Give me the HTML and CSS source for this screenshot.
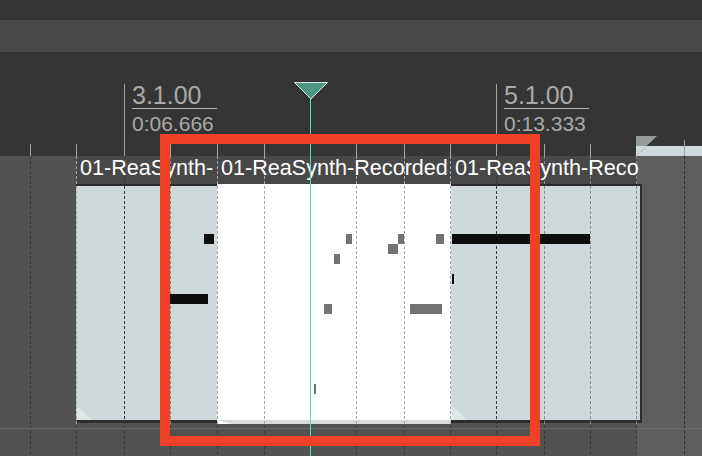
FILE: index.html
```html
<!DOCTYPE html>
<html>
<head>
<meta charset="utf-8">
<link rel="stylesheet" href="styles.css">
</head>
<body>
<div class="app">
  <div class="topbar"></div>
  <div class="band"></div>
  <div class="ruler">
    <span class="tick" style="left:30px"></span>
    <span class="tick" style="left:76px"></span>
    <span class="tick major" style="left:124px"></span>
    <span class="tick" style="left:170px"></span>
    <span class="tick" style="left:217px"></span>
    <span class="tick" style="left:264px"></span>
    <span class="tick" style="left:310px"></span>
    <span class="tick" style="left:356px"></span>
    <span class="tick" style="left:404px"></span>
    <span class="tick" style="left:450px"></span>
    <span class="tick major" style="left:496px"></span>
    <span class="tick" style="left:544px"></span>
    <span class="tick" style="left:590px"></span>
    <span class="tick" style="left:684px"></span>
    <div class="label" style="left:132px">
      <div class="bbt">3.1.00</div>
      <div class="time">0:06.666</div>
    </div>
    <div class="label" style="left:504px">
      <div class="bbt">5.1.00</div>
      <div class="time">0:13.333</div>
    </div>
    <svg class="nextitem" width="66" height="20" viewBox="0 0 66 20">
      <rect x="0" y="10" width="66" height="10" fill="#cfd8da"/>
      <polygon points="0,0 21,0 10.5,10 0,10" fill="#959c9c"/>
      <line x1="10.5" y1="10" x2="1" y2="20" stroke="#b4bcbc" stroke-width="1"/>
      <line x1="48.5" y1="4" x2="48.5" y2="20" stroke="#9aa0a0" stroke-width="1"/>
    </svg>
  </div>
  <div class="track">
    <div class="beyond"></div>
    <div class="gridbg">
      <span class="vl dark" style="left:30px"></span>
      <span class="vl dark" style="left:76px"></span>
      <span class="vl dark" style="left:124px"></span>
      <span class="vl dark" style="left:170px"></span>
      <span class="vl dark" style="left:217px"></span>
      <span class="vl dark" style="left:264px"></span>
      <span class="vl dark" style="left:356px"></span>
      <span class="vl dark" style="left:404px"></span>
      <span class="vl dark" style="left:450px"></span>
      <span class="vl dark" style="left:496px"></span>
      <span class="vl dark" style="left:544px"></span>
      <span class="vl dark" style="left:590px"></span>
      <span class="vl dark" style="left:636px"></span>
      <span class="vl darker" style="left:684px"></span>
    </div>
    <div class="separator"></div>

    <div class="item item-1">
      <div class="cap"></div>
      <div class="body grey">
        <span class="fade"></span>
      </div>
      <div class="lines">
        <span class="vl edge" style="left:0px"></span>
        <span class="vl dark" style="left:48px"></span>
        <span class="vl mid" style="left:94px"></span>
      </div>
      <div class="name">01-ReaSynth-</div>
      <span class="note black" style="left:128px;top:78px;width:10px"></span>
      <span class="note black" style="left:94px;top:138px;width:38px"></span>
    </div>

    <div class="item item-2">
      <div class="cap"></div>
      <div class="body white">
        <span class="fade-w"></span>
      </div>
      <div class="lines">
        <span class="vl light" style="left:0px"></span>
        <span class="vl light" style="left:47px"></span>
        <span class="vl light" style="left:139px"></span>
        <span class="vl light" style="left:187px"></span>
        <span class="vl light" style="left:233px"></span>
      </div>
      <div class="name">01-ReaSynth-Recorded</div>
      <span class="note grey" style="left:129px;top:78px;width:6px"></span>
      <span class="note grey" style="left:181px;top:78px;width:6px"></span>
      <span class="note grey" style="left:171px;top:88px;width:10px"></span>
      <span class="note grey" style="left:117px;top:98px;width:6px"></span>
      <span class="note grey" style="left:219px;top:78px;width:8px"></span>
      <span class="note grey" style="left:107px;top:148px;width:8px"></span>
      <span class="note grey" style="left:193px;top:148px;width:32px"></span>
      <span class="note grey" style="left:97px;top:228px;width:2px"></span>
    </div>

    <div class="item item-3">
      <div class="cap"></div>
      <div class="body grey">
        <span class="fade"></span>
      </div>
      <div class="lines">
        <span class="vl dark" style="left:45px"></span>
        <span class="vl mid" style="left:93px"></span>
        <span class="vl mid" style="left:139px"></span>
        <span class="vl mid" style="left:185px"></span>
      </div>
      <div class="name">01-ReaSynth-Reco</div>
      <span class="note black" style="left:1px;top:78px;width:138px"></span>
      <span class="note black" style="left:1px;top:118px;width:2px"></span>
    </div>
  </div>

  <div class="playhead"></div>
  <svg class="playhead-cap" width="35" height="18" viewBox="0 0 35 18">
    <polygon points="0.5,0.5 33.5,0.5 17,17" fill="#4f9685" stroke="#d6ebe5" stroke-width="1"/>
  </svg>
  <div class="focus"></div>
</div>
</body>
</html>
```

FILE: styles.css
```css
html, body {
  margin: 0;
  padding: 0;
  background: #353535;
}

body {
  font-family: "Liberation Sans", Arial, sans-serif;
  overflow: hidden;
}

.app {
  position: relative;
  width: 702px;
  height: 456px;
  overflow: hidden;
}

.topbar {
  height: 20px;
  background: #353535;
}

.band {
  height: 32px;
  background: #484848;
}

.ruler {
  position: relative;
  height: 104px;
  background: #353535;
}

.tick {
  position: absolute;
  top: 92px;
  width: 1px;
  height: 12px;
  background: #a4a4a4;
}

.tick.major {
  top: 32px;
  height: 72px;
}

.label {
  position: absolute;
  top: 31px;
  color: #a9a9a9;
}

.bbt {
  width: 85px;
  font-size: 25px;
  line-height: 25px;
  border-bottom: 1px solid #b4b4b4;
}

.time {
  margin-top: 4px;
  font-size: 21px;
  line-height: 21px;
}

.nextitem {
  position: absolute;
  left: 636px;
  top: 84px;
  display: block;
}

.track {
  position: relative;
  height: 300px;
  background: #525252;
}

.beyond {
  position: absolute;
  left: 637px;
  right: 0;
  top: 0;
  bottom: 0;
  background: #5e5e5e;
}

.gridbg {
  position: absolute;
  inset: 0;
}

.separator {
  position: absolute;
  left: 0;
  right: 0;
  top: 272px;
  height: 1px;
  background: #696969;
}

.vl {
  position: absolute;
  top: 0;
  bottom: 0;
  width: 1px;
  background: repeating-linear-gradient(to bottom, var(--c) 0 3px, transparent 3px 5px);
}

.vl.dark { --c: #383838; }
.vl.darker { --c: #2a2a2a; }
.vl.mid { --c: #858a8b; }
.vl.light { --c: #a9a9a9; }
.vl.edge { --c: #a3a9aa; }

.item {
  position: absolute;
  top: 0;
  height: 268px;
  overflow: hidden;
}

.item-1 { left: 76px; width: 141px; }
.item-2 { left: 217px; width: 234px; }
.item-3 { left: 451px; width: 191px; }

.cap {
  position: absolute;
  left: 0;
  top: 0;
  right: 0;
  height: 28px;
  background: #484848;
}

.item-3 .cap {
  right: 5px;
}

.body {
  position: absolute;
  left: 0;
  right: 0;
  top: 28px;
  height: 239px;
  box-sizing: border-box;
}

.body.grey {
  background: #cfd8da;
  border-top: 2px solid #2c2c2c;
  border-bottom: 3px solid #2d2d2d;
}

.item-3 .body.grey {
  border-right: 2px solid #2d2d2d;
}

.body.white {
  background: #ffffff;
  border-bottom: 4px solid #dadada;
  height: 240px;
}

.fade {
  position: absolute;
  left: 0;
  bottom: 0;
  width: 16px;
  height: 15px;
  background: #dfe6e6;
  clip-path: polygon(0 0, 100% 100%, 0 100%);
}

.fade-w {
  position: absolute;
  left: 0;
  bottom: -4px;
  width: 15px;
  height: 4px;
  background: #ffffff;
  clip-path: polygon(0 0, 100% 100%, 0 100%);
}

.lines {
  position: absolute;
  inset: 0;
}

.name {
  position: absolute;
  left: 0;
  top: 0;
  height: 28px;
  padding-left: 4px;
  white-space: nowrap;
  color: #ffffff;
  font-size: 21.6px;
  line-height: 24px;
}

.note {
  position: absolute;
  height: 10px;
}

.note.black { background: #0e0e0e; }
.note.grey { background: #737373; }

.playhead {
  position: absolute;
  left: 310px;
  top: 98px;
  bottom: 0;
  width: 1px;
  background: #5cdbbf;
  z-index: 5;
}

.playhead-cap {
  position: absolute;
  left: 294px;
  top: 82px;
  display: block;
  z-index: 6;
}

.focus {
  position: absolute;
  left: 160px;
  top: 134px;
  width: 380px;
  height: 312px;
  box-sizing: border-box;
  border: 10px solid #ee4126;
  z-index: 10;
}
```
